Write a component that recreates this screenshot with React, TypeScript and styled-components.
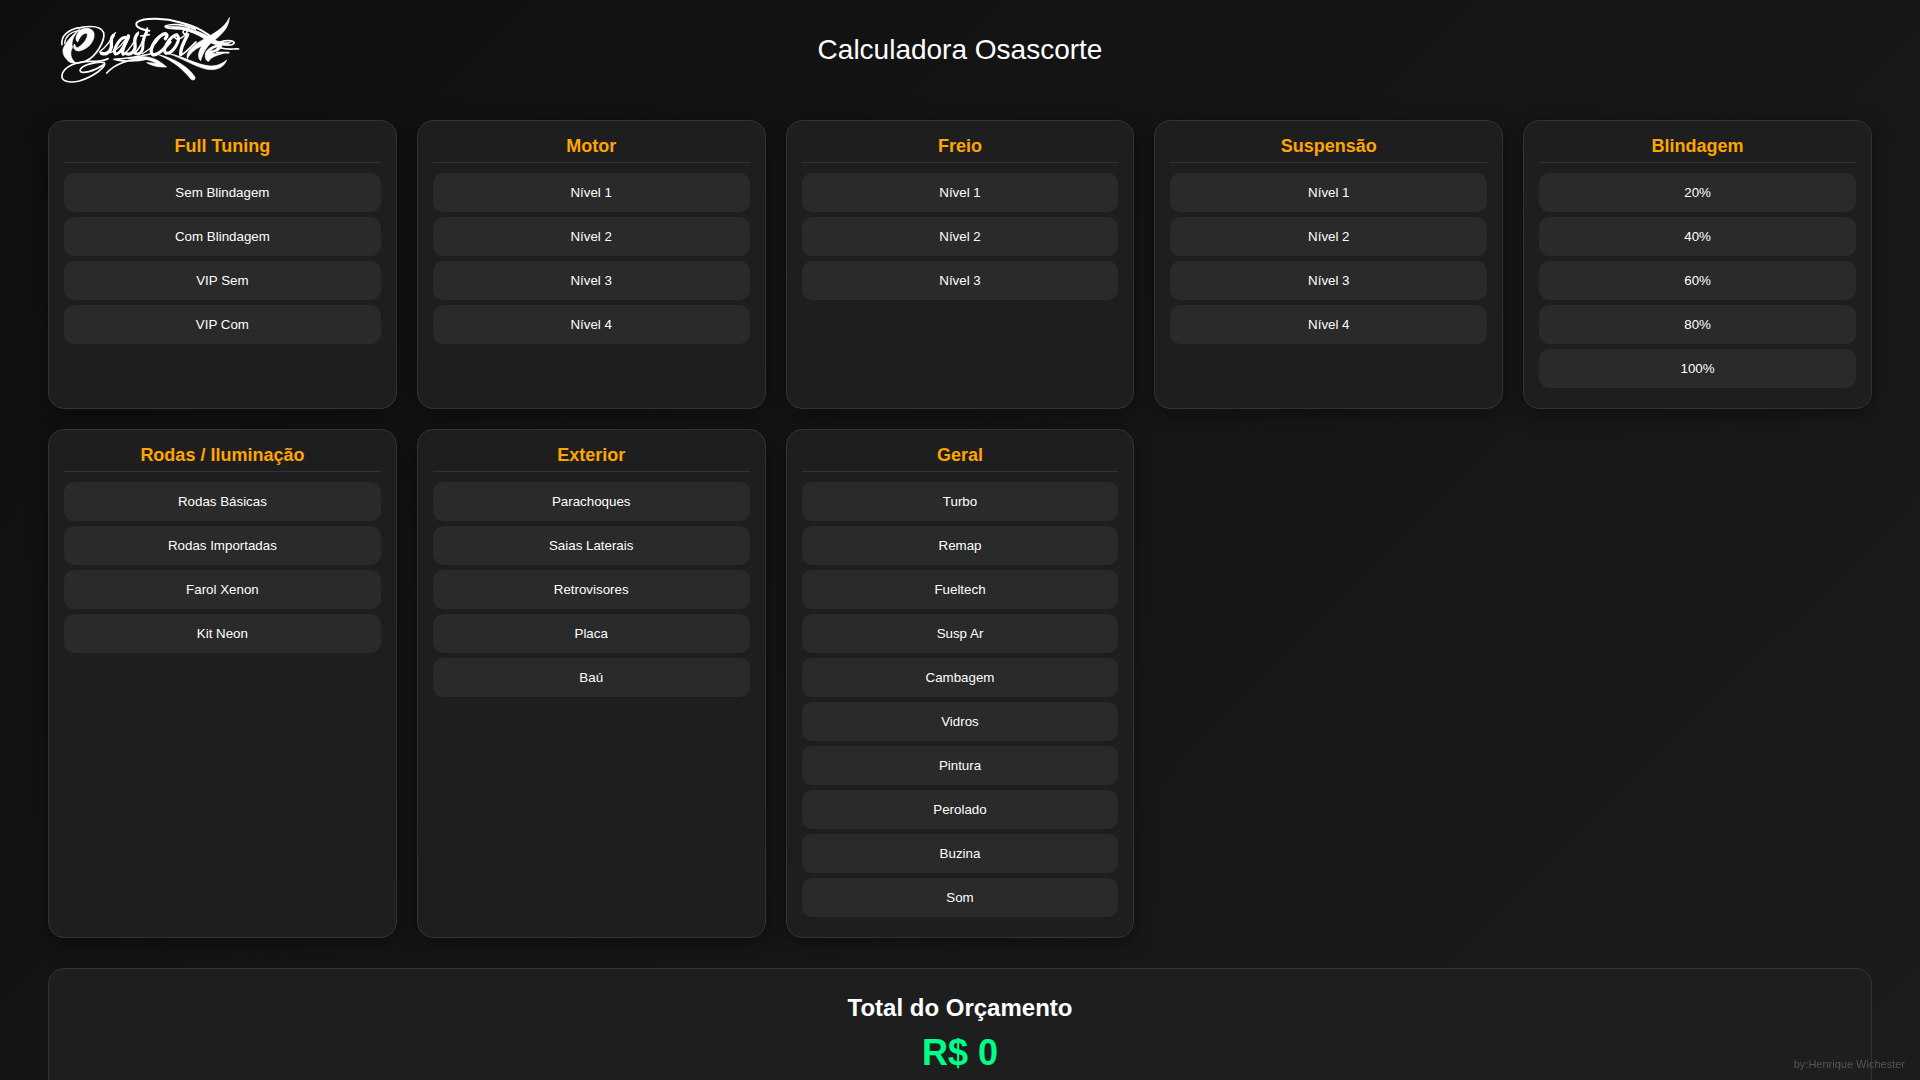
import React, { useState } from "react";
import styled, { createGlobalStyle } from "styled-components";

const GlobalStyle = createGlobalStyle`
  * { box-sizing: border-box; }
  body {
    margin: 0;
    min-height: 100vh;
    color: #fff;
    font-family: "Liberation Sans", Arial, sans-serif;
    background: linear-gradient(135deg, #0f0f0f, #1c1c1c);
  }
`;

const Page = styled.div`
  padding: 0 48px 40px;
`;

const Header = styled.header`
  display: grid;
  grid-template-columns: 1fr auto 1fr;
  align-items: center;
  height: 100px;
  margin-bottom: 20px;
`;

const Logo = styled.svg`
  width: 204px;
  height: 100px;
  fill: none;
  stroke: #fff;
  stroke-linecap: round;
  stroke-linejoin: round;
`;

const Title = styled.h1`
  margin: 0;
  font-size: 28px;
  font-weight: 400;
  line-height: 32px;
`;

const Grid = styled.main`
  display: grid;
  grid-template-columns: repeat(5, 1fr);
  gap: 20px;
`;

const Card = styled.section`
  padding: 15px 15px 20px;
  border: 1px solid #333;
  border-radius: 16px;
  background: #1e1e1e;
  box-shadow: 0 5px 20px rgba(0, 0, 0, 0.4);
`;

const CardTitle = styled.h2`
  margin: 0 0 10px;
  padding-bottom: 5px;
  border-bottom: 1px solid #333;
  color: orange;
  font-size: 18px;
  line-height: 21px;
  text-align: center;
`;

const Options = styled.div`
  display: grid;
  gap: 5px;
`;

const Option = styled.button<{ $active: boolean }>`
  padding: 12px;
  border: 0;
  border-radius: 10px;
  background: ${({ $active }) => ($active ? "orange" : "#2a2a2a")};
  color: ${({ $active }) => ($active ? "#000" : "#fff")};
  font-family: inherit;
  line-height: 15px;
  cursor: pointer;
`;

const Total = styled.section`
  margin-top: 30px;
  padding: 25px;
  border: 1px solid #333;
  border-radius: 16px;
  background: #1e1e1e;
  text-align: center;
`;

const TotalTitle = styled.h2`
  margin: 0;
  font-size: 24px;
  line-height: 28px;
`;

const Amount = styled.output`
  display: block;
  margin-top: 10px;
  color: #00ff88;
  font-size: 36px;
  font-weight: 700;
  line-height: 42px;
`;

const Credit = styled.footer`
  position: fixed;
  right: 15px;
  bottom: 10px;
  color: #555;
  font-size: 11px;
  line-height: 12px;
`;

const groups = [
  { name: "Full Tuning", items: ["Sem Blindagem", "Com Blindagem", "VIP Sem", "VIP Com"] },
  { name: "Motor", items: ["Nível 1", "Nível 2", "Nível 3", "Nível 4"] },
  { name: "Freio", items: ["Nível 1", "Nível 2", "Nível 3"] },
  { name: "Suspensão", items: ["Nível 1", "Nível 2", "Nível 3", "Nível 4"] },
  { name: "Blindagem", items: ["20%", "40%", "60%", "80%", "100%"] },
  { name: "Rodas / Iluminação", items: ["Rodas Básicas", "Rodas Importadas", "Farol Xenon", "Kit Neon"] },
  { name: "Exterior", items: ["Parachoques", "Saias Laterais", "Retrovisores", "Placa", "Baú"] },
  {
    name: "Geral",
    items: ["Turbo", "Remap", "Fueltech", "Susp Ar", "Cambagem", "Vidros", "Pintura", "Perolado", "Buzina", "Som"],
  },
];

function OsascorteLogo() {
  return (
    <Logo viewBox="24 0 612 300" role="img" aria-label="Osascorte">
      {/* capital O with its outer loop */}
      <path strokeWidth="5" d="M66 134C62 108 84 88 120 83C158 76 184 80 191 98C196 120 170 170 136 184C114 192 92 190 84 180" />
      <path strokeWidth="4" d="M74 130C76 110 92 96 116 92" />
      <path fill="#fff" strokeWidth="2" d="M120 86C98 104 76 126 69 148C67 168 80 186 106 188C92 176 88 158 98 142C92 128 100 106 120 86Z" />
      <path fill="#fff" strokeWidth="2" d="M118 92C134 80 158 84 162 100C166 124 142 150 116 153C102 152 98 142 103 132C106 138 108 144 114 143C132 132 148 108 140 100C130 98 120 110 113 126C104 120 108 104 118 92Z" />
      {/* lower flourish on the left */}
      <path strokeWidth="5" d="M194 192C164 214 122 224 120 212C122 194 174 184 192 188C204 198 160 230 118 243C86 250 64 244 66 226C70 200 110 184 150 184C170 184 190 184 204 176" />
      {/* s a s */}
      <path strokeWidth="4" d="M178 156C196 144 212 122 226 98" />
      <path strokeWidth="10" d="M220 106C206 120 220 132 212 148C206 160 196 164 184 160" />
      <path strokeWidth="9" d="M256 112C240 112 216 150 226 162C240 164 258 130 266 108" />
      <path strokeWidth="10" d="M264 114C250 140 244 158 250 162" />
      <path strokeWidth="4" d="M212 158C236 146 252 130 264 104M250 164C272 146 286 122 296 96" />
      <path strokeWidth="10" d="M292 102C276 120 290 134 284 148C278 160 268 166 258 160" />
      {/* s with the tall ascender */}
      <path strokeWidth="5" d="M284 160C300 144 314 114 322 84M302 108L328 104" />
      <path strokeWidth="9" d="M320 96C300 132 314 136 306 152C300 164 290 164 282 158" />
      {/* c o r */}
      <path strokeWidth="4" d="M306 162C324 152 346 132 360 112" />
      <path strokeWidth="10" d="M376 116C386 104 378 96 364 106C342 120 326 152 338 164C352 168 372 148 390 126" />
      <path strokeWidth="9" d="M410 104C390 108 364 150 378 160C398 162 424 120 412 106" />
      <path strokeWidth="5" d="M406 104C398 116 414 124 432 108C448 92 440 84 432 90C424 98 434 106 446 102" />
      <path strokeWidth="10" d="M442 106C430 128 420 148 422 164" />
      <path strokeWidth="5" d="M422 166C436 160 452 140 468 126" />
      {/* t sweeping into the horn */}
      <path fill="#fff" strokeWidth="2" d="M568 54C566 84 544 106 516 126C498 142 488 162 482 182C472 174 474 154 486 138C466 146 450 160 442 176C436 158 456 138 484 122C518 102 550 88 568 54Z" />
      <path fill="#fff" strokeWidth="2" d="M378 80C420 74 474 88 520 118C540 128 556 130 574 126C556 140 530 138 508 126C470 98 424 84 378 80Z" />
      {/* e and its tails */}
      <path fill="#fff" strokeWidth="2" d="M546 132C520 134 498 148 496 162C494 176 500 184 506 184C514 170 532 166 550 160C534 162 522 162 516 158C530 156 548 148 546 132ZM534 140C530 148 522 152 512 153C516 146 524 142 534 140Z" />
      <path strokeWidth="5" d="M540 126C568 118 586 124 582 130C576 138 556 136 544 132M544 144C560 150 578 146 596 147M530 158L566 158" />
      {/* top ribbon */}
      <path strokeWidth="6" d="M328 92C296 88 282 76 292 66C314 52 376 54 424 68C458 76 486 90 508 106" />
      <path strokeWidth="5" d="M446 84C406 90 370 84 376 78C394 70 432 72 466 88" />
      {/* underline strokes */}
      <path strokeWidth="5" d="M200 219C224 192 270 174 324 176C294 184 244 186 222 178C252 176 290 172 330 162" />
      <path fill="#fff" strokeWidth="2" d="M264 176C310 162 346 170 380 201C352 202 334 196 320 188C332 188 342 190 350 190C328 178 302 174 264 176Z" />
      <path fill="#fff" strokeWidth="2" d="M356 164C404 174 452 206 465 232C466 240 460 242 453 238C430 208 404 186 356 164Z" />
      <path fill="#fff" strokeWidth="2" d="M384 160C430 168 466 194 510 198C534 198 548 190 560 180C552 202 530 212 502 208C464 200 430 176 384 160Z" />
    </Logo>
  );
}

export default function App() {
  const [selected, setSelected] = useState<string[]>([]);
  const toggle = (key: string) =>
    setSelected((prev) => (prev.includes(key) ? prev.filter((k) => k !== key) : [...prev, key]));

  return (
    <>
      <GlobalStyle />
      <Page>
        <Header>
          <OsascorteLogo />
          <Title>Calculadora Osascorte</Title>
        </Header>
        <Grid>
          {groups.map((group) => (
            <Card key={group.name}>
              <CardTitle>{group.name}</CardTitle>
              <Options>
                {group.items.map((item) => {
                  const key = `${group.name}/${item}`;
                  const active = selected.includes(key);
                  return (
                    <Option key={key} type="button" $active={active} aria-pressed={active} onClick={() => toggle(key)}>
                      {item}
                    </Option>
                  );
                })}
              </Options>
            </Card>
          ))}
        </Grid>
        <Total>
          <TotalTitle>Total do Orçamento</TotalTitle>
          <Amount>R$ 0</Amount>
        </Total>
      </Page>
      <Credit>by:Henrique Wichester</Credit>
    </>
  );
}
